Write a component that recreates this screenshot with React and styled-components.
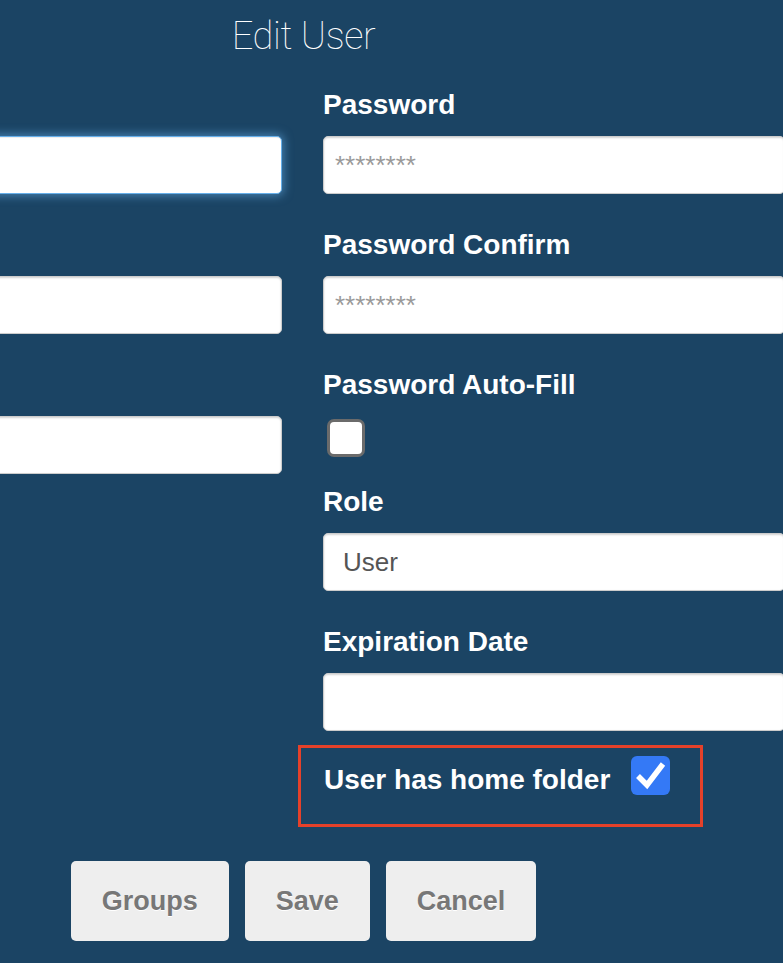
import React from 'react';
import styled, { createGlobalStyle } from 'styled-components';

const GlobalStyle = createGlobalStyle`
   html, body {
      margin: 0;
      padding: 0;
      background: #1b4464;
   }
   body {
      font-family: "Liberation Sans", Arial, sans-serif;
   }
`;

const Page = styled.div`
   width: 783px;
   height: 963px;
   overflow: hidden;
   background: #1b4464;
`;

// the form is wider than the window, its left column runs off screen
const Form = styled.form`
   width: 963px;
   margin-left: -178px;
`;

const Title = styled.h2`
   margin: 0;
   padding-top: 13px;
   height: 86px;
   box-sizing: border-box;
   text-align: center;
   font-family: Roboto, "Liberation Sans", sans-serif;
   font-weight: 100;
   font-size: 38px;
   letter-spacing: -0.4px;
   line-height: 46px;
   color: #ffffff;
`;

const Columns = styled.div`
   display: grid;
   grid-template-columns: 460px 462px;
   column-gap: 41px;
   align-items: start;
`;

const Column = styled.div`
   display: flex;
   flex-direction: column;
`;

const FieldGroup = styled.div`
   display: flex;
   flex-direction: column;
   align-items: flex-start;
   margin-bottom: ${props => props.$after || 32}px;
`;

const Label = styled.label`
   height: 34px;
   padding-top: 2px;
   font-size: 28px;
   line-height: 34px;
   font-weight: 700;
   color: #ffffff;
   margin-bottom: 14px;
   white-space: nowrap;
`;

const TextInput = styled.input`
   width: 100%;
   height: 58px;
   box-sizing: border-box;
   padding: 0 11px;
   border: 1px solid ${props => (props.$focused ? '#66afe9' : '#cccccc')};
   border-radius: 5px;
   background: #ffffff;
   font-family: "Liberation Sans", Arial, sans-serif;
   font-size: 26px;
   color: #555555;
   outline: none;
   box-shadow: ${props =>
      props.$focused
         ? 'inset 0 1px 1px rgba(0,0,0,.075), 0 0 10px 2px rgba(102,175,233,.55)'
         : 'inset 0 1px 2px rgba(0,0,0,.18)'};
   &::placeholder {
      color: #9a9a9a;
   }
`;

const Select = styled.select`
   width: 100%;
   height: 58px;
   box-sizing: border-box;
   padding: 0 19px;
   border: 1px solid #cccccc;
   border-radius: 5px;
   background: #ffffff;
   appearance: none;
   font-family: "Liberation Sans", Arial, sans-serif;
   font-size: 26px;
   color: #555555;
   box-shadow: inset 0 1px 2px rgba(0,0,0,.18);
`;

const Checkbox = styled.span`
   display: inline-block;
   width: 38px;
   height: 38px;
   box-sizing: border-box;
   margin: 3px 0 0 4px;
   border: 3px solid #6b6b6b;
   border-radius: 7px;
   background: #ffffff;
`;

const HomeFolderBox = styled.div`
   display: flex;
   align-items: flex-start;
   gap: 21px;
   width: 405px;
   height: 82px;
   box-sizing: border-box;
   margin-left: -25px;
   padding: 8px 0 0 23px;
   border: 3px solid #e5412a;
`;

const InlineLabel = styled.span`
   margin-top: 7px;
   font-size: 28px;
   line-height: 34px;
   font-weight: 700;
   color: #ffffff;
   white-space: nowrap;
`;

const CheckedBox = styled.span`
   display: inline-flex;
   width: 39px;
   height: 39px;
   border-radius: 6px;
   background: #3479f6;
`;

const ButtonRow = styled.div`
   display: flex;
   justify-content: center;
   gap: 16px;
   margin-top: 34px;
`;

const Button = styled.button`
   height: 80px;
   padding: 0 31px;
   border: none;
   border-radius: 5px;
   background: #eeeeee;
   font-family: "Liberation Sans", Arial, sans-serif;
   font-size: 27px;
   font-weight: 700;
   color: #777777;
   text-shadow: 0 1px 0 #ffffff;
`;

const CheckMark = () => (
   <svg width="39" height="39" viewBox="0 0 39 39">
      <polyline
         points="7,20 16,29 32,8"
         fill="none"
         stroke="#ffffff"
         strokeWidth="5.5"
         strokeLinejoin="miter"
      />
   </svg>
);

const App = () => (
   <Page>
      <GlobalStyle />
      <Form onSubmit={e => e.preventDefault()}>
         <Title>Edit User</Title>
         <Columns>
            {/* left column: its labels sit outside the window */}
            <Column>
               <FieldGroup>
                  <Label />
                  <TextInput $focused />
               </FieldGroup>
               <FieldGroup>
                  <Label />
                  <TextInput />
               </FieldGroup>
               <FieldGroup>
                  <Label />
                  <TextInput />
               </FieldGroup>
            </Column>
            <Column>
               <FieldGroup>
                  <Label>Password</Label>
                  <TextInput type="password" placeholder="********" />
               </FieldGroup>
               <FieldGroup>
                  <Label>Password Confirm</Label>
                  <TextInput type="password" placeholder="********" />
               </FieldGroup>
               <FieldGroup $after={26}>
                  <Label>Password Auto-Fill</Label>
                  <Checkbox />
               </FieldGroup>
               <FieldGroup>
                  <Label>Role</Label>
                  <Select defaultValue="user">
                     <option value="user">User</option>
                     <option value="admin">Admin</option>
                  </Select>
               </FieldGroup>
               <FieldGroup $after={14}>
                  <Label>Expiration Date</Label>
                  <TextInput />
               </FieldGroup>
               <HomeFolderBox>
                  <InlineLabel>User has home folder</InlineLabel>
                  <CheckedBox>
                     <CheckMark />
                  </CheckedBox>
               </HomeFolderBox>
            </Column>
         </Columns>
         <ButtonRow>
            <Button type="button">Groups</Button>
            <Button type="button">Save</Button>
            <Button type="button">Cancel</Button>
         </ButtonRow>
      </Form>
   </Page>
);

export default App;
